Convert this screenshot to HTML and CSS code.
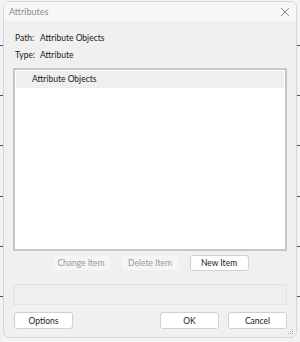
FILE: index.html
```html
<!DOCTYPE html>
<html>
<head>
<meta charset="utf-8">
<link rel="stylesheet" href="styles.css">
</head>
<body>
<div class="desk">
  <div class="edge left"><i></i><i></i><i></i><i></i><i></i><i></i></div>
  <div class="win">
    <div class="title">
      <span class="ttext">Attributes</span>
      <svg class="close" width="10" height="10" viewBox="0 0 10 10"><path d="M1 1L9 9M9 1L1 9" stroke="#8a8a8a" stroke-width="1"/></svg>
    </div>
    <div class="body">
      <div class="info"><span class="lab">Path:</span><span>Attribute Objects</span></div>
      <div class="info"><span class="lab">Type:</span><span>Attribute</span></div>
      <div class="list">
        <div class="lhead">Attribute Objects</div>
      </div>
      <div class="actions">
        <button class="btn dis">Change Item</button>
        <button class="btn dis">Delete Item</button>
        <button class="btn">New Item</button>
      </div>
      <div class="status"></div>
      <div class="footer">
        <button class="btn">Options</button>
        <div class="right">
          <button class="btn">OK</button>
          <button class="btn">Cancel</button>
        </div>
      </div>
    </div>
    <svg class="grip" width="6" height="6" viewBox="0 0 6 6"><rect x="4" y="0" width="1" height="1" fill="#aaa"/><rect x="2" y="2" width="1" height="1" fill="#aaa"/><rect x="4" y="2" width="1" height="1" fill="#aaa"/><rect x="0" y="4" width="1" height="1" fill="#aaa"/><rect x="2" y="4" width="1" height="1" fill="#aaa"/><rect x="4" y="4" width="1" height="1" fill="#aaa"/></svg>
  </div>
  <div class="edge rgt"><i></i><i></i><i></i><i></i><i></i><i></i></div>
</div>
</body>
</html>
```
FILE: styles.css
```css
* { box-sizing: border-box; }
html, body { margin: 0; padding: 0; }
body { width: 300px; height: 342px; overflow: hidden; background: #f4f4f4; font-family: "Lato", "Noto Sans", sans-serif; font-size: 8.5px; color: #1a1a1a; }
.desk { display: flex; height: 342px; }
.edge { width: 3px; display: flex; flex-direction: column; justify-content: space-around; padding: 20px 0; background: #f2f2f2; }
.edge i { display: block; height: 1px; background: #555; }
.win { position: relative; flex: 1; margin: 1px 0 4px; background: #f0f0f0; border: 1px solid #d6d6d6; border-radius: 6px; display: flex; flex-direction: column; overflow: hidden; }
.title { height: 21px; background: #f7f7f7; display: flex; align-items: center; justify-content: space-between; padding: 0 6px 0 5px; }
.ttext { color: #8c8c8c; font-size: 9px; }
.body { flex: 1; display: flex; flex-direction: column; padding: 8px 9px 8px 9px; }
.info { display: flex; height: 17px; align-items: center; }
.lab { width: 27px; padding-left: 2px; }
.list { height: 183px; margin-top: 5px; background: #fff; border: 2px solid #c6c6ca; padding: 1px; }
.lhead { background: #efefef; height: 17px; line-height: 17px; padding-left: 16px; }
.actions { display: flex; justify-content: center; gap: 10px; margin-top: 4px; }
.btn { font-family: inherit; font-size: 8.5px; color: #1a1a1a; height: 16px; width: 59px; padding: 0; background: #fff; border: 1px solid #d0d0d0; border-radius: 3px; }
.btn.dis { background: #f5f5f5; border-color: #f0f0f0; color: #9a9a9a; }
.status { height: 21px; margin-top: 13px; border: 1px solid #e2e2e2; background: #efefef; }
.footer { display: flex; justify-content: space-between; margin-top: 7px; padding: 0 0 0 1px; }
.footer .btn { height: 17px; }
.right { display: flex; gap: 9px; }
.grip { position: absolute; right: 2px; bottom: 2px; }
```
